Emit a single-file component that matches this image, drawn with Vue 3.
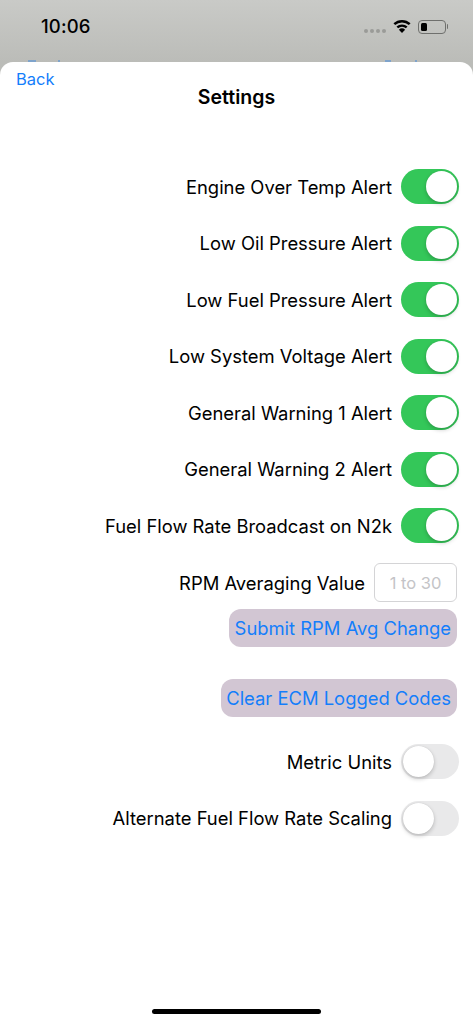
<script setup>
const onTop = [
  'Engine Over Temp Alert',
  'Low Oil Pressure Alert',
  'Low Fuel Pressure Alert',
  'Low System Voltage Alert',
  'General Warning 1 Alert',
  'General Warning 2 Alert',
  'Fuel Flow Rate Broadcast on N2k',
]
const offBottom = ['Metric Units', 'Alternate Fuel Flow Rate Scaling']
</script>

<template>
  <div class="screen">
    <div class="behind">
      <div class="status">
        <span class="time">10:06</span>
        <div class="status-right">
          <div class="dots"><i></i><i></i><i></i><i></i></div>
          <svg class="wifi" width="18" height="14" viewBox="0 0 18 14">
            <path d="M1.300 5.200A11.300 11.300 0 0 1 16.700 5.200" fill="none" stroke="#000" stroke-width="2.500"/>
            <path d="M4.300 8.400A7 7 0 0 1 13.700 8.400" fill="none" stroke="#000" stroke-width="2.400"/>
            <path d="M9 14L5.900 10.800A4.500 4.500 0 0 1 12.100 10.800Z" fill="#000"/>
          </svg>
          <div class="battery">
            <div class="shell"><div class="level"></div></div>
            <div class="nub"></div>
          </div>
        </div>
      </div>
      <div class="peek">
        <i class="m1"></i><i class="m2"></i>
        <i class="m3"></i><i class="m4"></i>
      </div>
    </div>

    <main class="sheet">
      <a class="back">Back</a>
      <h1 class="title">Settings</h1>

      <div class="rows">
        <div v-for="label in onTop" :key="label" class="row">
          <span class="label">{{ label }}</span>
          <span class="switch on"><span class="knob"></span></span>
        </div>

        <div class="form">
          <div class="rpm">
            <span class="label">RPM Averaging Value</span>
            <input class="rpm-input" placeholder="1 to 30" />
          </div>
          <button class="action submit">Submit RPM Avg Change</button>
          <button class="action clear">Clear ECM Logged Codes</button>
        </div>

        <div class="off-group">
          <div v-for="label in offBottom" :key="label" class="row">
            <span class="label">{{ label }}</span>
            <span class="switch"><span class="knob"></span></span>
          </div>
        </div>
      </div>

      <div class="home-bar"></div>
    </main>
  </div>
</template>

<style>
html, body { margin: 0; background: #fff; }
</style>

<style scoped>
.screen {
  display: flex;
  flex-direction: column;
  width: 473px;
  height: 1024px;
  overflow: hidden;
  font-family: Inter, "Liberation Sans", sans-serif;
  color: #000;
  background: #bbbcb8;
}
.behind {
  display: flex;
  flex-direction: column;
  height: 62px;
  flex: none;
  background: linear-gradient(#c9cac7, #bbbcb8);
}
.status {
  height: 52px;
  display: flex;
  align-items: center;
  justify-content: space-between;
  padding: 0 25px 0 41px;
}
.time {
  font-size: 18.500px;
  font-weight: 500;
  letter-spacing: 0.150px;
}
.status-right {
  display: flex;
  align-items: center;
}
.dots {
  display: flex;
  gap: 2px;
  margin: 9px 7px 0 0;
}
.dots i {
  width: 4px;
  height: 4px;
  border-radius: 50%;
  background: #9a9b98;
}
.wifi { margin-right: 7px; }
.battery { display: flex; align-items: center; margin-top: 1px; }
.shell {
  box-sizing: border-box;
  width: 27.500px;
  height: 14px;
  border: 1px solid #6f706d;
  border-radius: 4px;
  padding: 2px;
}
.level {
  width: 6px;
  height: 100%;
  background: #000;
  border-radius: 1.500px;
}
.nub {
  width: 1.500px;
  height: 5px;
  margin-left: 1px;
  background: #6f706d;
  border-radius: 0 1px 1px 0;
}
.peek {
  display: flex;
  margin-top: auto;
  height: 2px;
  padding-left: 28px;
}
.peek i { height: 2px; background: #7ea3cb; }
.m1 { width: 8px; }
.m2 { width: 2px; margin-left: 22px; }
.m3 { width: 6px; margin-left: 325px; }
.m4 { width: 2px; margin-left: 24px; }
.sheet {
  position: relative;
  flex: 1;
  display: flex;
  flex-direction: column;
  background: #fff;
  border-radius: 13px 13px 0 0;
}
.back {
  position: absolute;
  top: 6px;
  left: 16px;
  font-size: 16.500px;
  line-height: 22px;
  color: #147efb;
}
.title {
  margin: 0;
  padding-top: 23px;
  text-align: center;
  font-size: 19.500px;
  line-height: 24px;
  font-weight: 600;
}
.rows {
  display: flex;
  flex-direction: column;
  align-items: flex-end;
  padding: 49.250px 14px 0 0;
}
.row {
  display: flex;
  align-items: center;
  justify-content: flex-end;
  gap: 9px;
  height: 56.500px;
}
.label {
  font-size: 18.400px;
  white-space: nowrap;
}
.switch {
  position: relative;
  width: 58px;
  height: 35px;
  border-radius: 18px;
  background: #e9e9ea;
}
.switch.on { background: #34c759; }
.knob {
  position: absolute;
  top: 2px;
  left: 2px;
  width: 31px;
  height: 31px;
  border-radius: 50%;
  background: #fff;
  box-shadow: 0 2px 4px rgba(0, 0, 0, 0.2), 0 0 1px rgba(0, 0, 0, 0.15);
}
.switch.on .knob { left: 25px; }
.form {
  display: flex;
  flex-direction: column;
  align-items: flex-end;
  padding: 9.250px 2px 0 0;
}
.rpm {
  display: flex;
  align-items: center;
  gap: 9px;
}
.rpm-input {
  box-sizing: border-box;
  width: 83px;
  height: 39px;
  border: 1px solid #d4d4d6;
  border-radius: 6px;
  padding: 0;
  text-align: center;
  font: inherit;
  font-size: 16.500px;
  outline: none;
  background: #fff;
}
.rpm-input::placeholder { color: #c4c4c7; opacity: 1; }
.action {
  height: 38px;
  border: 0;
  border-radius: 12px;
  background: #d2c6d3;
  color: #147efb;
  font: inherit;
  font-size: 18.400px;
  padding: 0 6px;
  white-space: nowrap;
}
.submit { margin-top: 7px; }
.clear { margin-top: 32px; padding: 0 6px 0 5px; }
.off-group {
  display: flex;
  flex-direction: column;
  align-items: flex-end;
  margin-top: 16.250px;
}
.home-bar {
  align-self: center;
  flex: none;
  width: 169px;
  height: 5px;
  margin: auto 0 10px;
  border-radius: 3px;
  background: #000;
}
</style>
